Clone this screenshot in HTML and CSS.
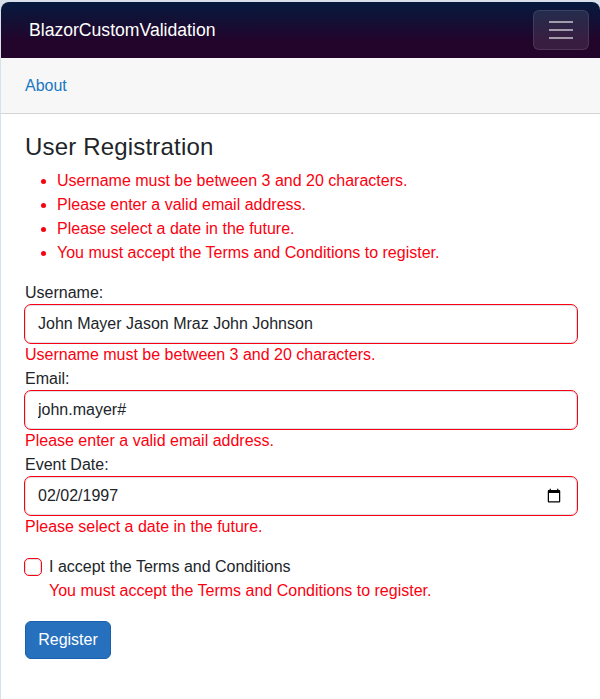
FILE: index.html
```html
<!DOCTYPE html>
<html lang="en">
<head>
<meta charset="utf-8">
<title>BlazorCustomValidation</title>
<link rel="stylesheet" href="styles.css">
</head>
<body>
<div class="page">
  <header class="navbar">
    <a class="brand">BlazorCustomValidation</a>
    <button class="toggler" type="button" aria-label="Menu">
      <svg width="30" height="30" viewBox="0 0 30 30"><path stroke="#fff" stroke-opacity=".55" stroke-width="2" stroke-linecap="butt" d="M3 7h24M3 15h24M3 23h24"/></svg>
    </button>
  </header>
  <div class="top-row"><a>About</a></div>
  <main class="content">
    <h3>User Registration</h3>
    <ul class="errors">
      <li>Username must be between 3 and 20 characters.</li>
      <li>Please enter a valid email address.</li>
      <li>Please select a date in the future.</li>
      <li>You must accept the Terms and Conditions to register.</li>
    </ul>
    <form>
      <label for="username">Username:</label>
      <input class="control" id="username" type="text" value="John Mayer Jason Mraz John Johnson">
      <div class="message">Username must be between 3 and 20 characters.</div>
      <label for="email">Email:</label>
      <input class="control" id="email" type="text" value="john.mayer#">
      <div class="message">Please enter a valid email address.</div>
      <label for="date">Event Date:</label>
      <input class="control" id="date" type="date" value="1997-02-02">
      <div class="message">Please select a date in the future.</div>
      <div class="check">
        <input id="terms" type="checkbox">
        <div>
          <label for="terms">I accept the Terms and Conditions</label>
          <div class="message">You must accept the Terms and Conditions to register.</div>
        </div>
      </div>
      <button class="submit" type="button">Register</button>
    </form>
  </main>
</div>
</body>
</html>
```
FILE: styles.css
```css
* { box-sizing: border-box; }
body {
  margin: 0;
  height: 699px;
  overflow: hidden;
  padding: 2px 0 0 1px;
  background: #d7e0eb;
  color: #212529;
  font: 16px/24px "Liberation Sans", Arial, sans-serif;
}
.page {
  height: 697px;
  background: #fff;
  border-radius: 8px 8px 0 0;
  overflow: hidden;
}
.navbar {
  height: 56px;
  display: flex;
  align-items: center;
  justify-content: space-between;
  padding: 0 11px 0 28px;
  background: linear-gradient(180deg, #051a3e 0%, #23042b 70%);
}
.brand { color: #fff; font-size: 17.6px; }
.toggler {
  width: 56px;
  height: 40px;
  padding: 0;
  display: flex;
  align-items: center;
  justify-content: center;
  border: 1px solid rgba(255, 255, 255, .1);
  border-radius: 6px;
  background: rgba(255, 255, 255, .1);
}
.top-row {
  height: 56px;
  display: flex;
  align-items: center;
  padding: 0 24px;
  background: #f7f7f7;
  border-bottom: 1px solid #d6d5d5;
}
.top-row a { color: #1a78c2; }
.content { padding: 18px 23px 0 24px; }
h3 { margin: 0 0 8px; font-size: 24px; font-weight: 400; line-height: 29px; letter-spacing: .18px; }
.errors { margin: 0 0 16px; padding-left: 32px; }
.errors, .message { color: #fb0010; }
label { display: block; }
.control {
  display: block;
  width: 100%;
  height: 38px;
  padding: 6px 12px;
  border: 1px solid #dee2e6;
  border-radius: 6px;
  outline: 1px solid #fb0010;
  background: #fff;
  color: #212529;
  font: inherit;
}
#date::-webkit-datetime-edit,
#date::-webkit-datetime-edit-fields-wrapper,
#date::-webkit-datetime-edit-month-field,
#date::-webkit-datetime-edit-day-field,
#date::-webkit-datetime-edit-year-field { padding: 0; }
.check { display: flex; margin-top: 16px; }
.check input {
  appearance: none;
  flex: none;
  width: 16px;
  height: 16px;
  margin: 4px 8px 0 0;
  border: 1px solid #dee2e6;
  border-radius: 4px;
  outline: 1px solid #fb0010;
}
.submit {
  width: 86px;
  height: 38px;
  margin-top: 18px;
  padding: 0;
  border: 1px solid #1861ac;
  border-radius: 6px;
  background: #2670be;
  color: #fff;
  font: inherit;
}
```
